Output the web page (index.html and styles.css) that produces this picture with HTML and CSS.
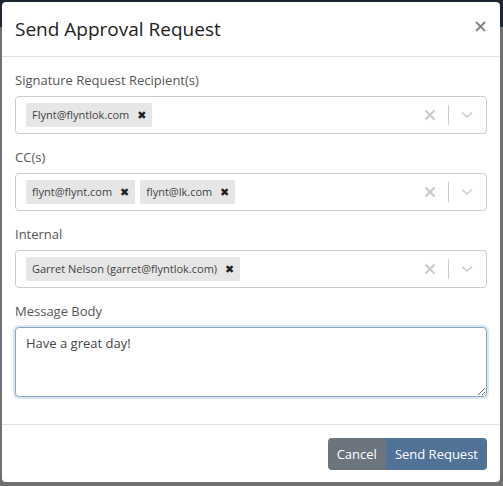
FILE: index.html
```html
<!DOCTYPE html>
<html lang="en">
<head>
    <meta charset="UTF-8">
    <meta name="viewport" content="width=device-width, initial-scale=1.0">
    <title>Send Approval Request</title>
    <link rel="stylesheet" href="styles.css">
</head>
<body>
    <div class="modal">
        <div class="modal-header">
            <h5 class="modal-title">Send Approval Request</h5>
            <button type="button" class="close">
                <svg width="11" height="11" viewBox="0 0 11 11"><path d="M1 1 L10 10 M10 1 L1 10" stroke="#808080" stroke-width="1.8"/></svg>
            </button>
        </div>
        <div class="modal-body">
            <div class="form-group">
                <label>Signature Request Recipient(s)</label>
                <div class="select">
                    <div class="values">
                        <span class="chip">Flynt@flyntlok.com <b>&#x2716;</b></span>
                    </div>
                    <div class="indicators">
                        <svg class="clear" width="12" height="12" viewBox="0 0 12 12"><path d="M1.5 1.5 L10.5 10.5 M10.5 1.5 L1.5 10.5" stroke="#cccccc" stroke-width="2.4"/></svg>
                        <span class="sep"></span>
                        <svg class="chev" width="12" height="8" viewBox="0 0 12 8"><path d="M1 1.5 L6 6 L11 1.5" fill="none" stroke="#cccccc" stroke-width="1.6"/></svg>
                    </div>
                </div>
            </div>
            <div class="form-group">
                <label>CC(s)</label>
                <div class="select">
                    <div class="values">
                        <span class="chip">flynt@flynt.com <b>&#x2716;</b></span>
                        <span class="chip">flynt@lk.com <b>&#x2716;</b></span>
                    </div>
                    <div class="indicators">
                        <svg class="clear" width="12" height="12" viewBox="0 0 12 12"><path d="M1.5 1.5 L10.5 10.5 M10.5 1.5 L1.5 10.5" stroke="#cccccc" stroke-width="2.4"/></svg>
                        <span class="sep"></span>
                        <svg class="chev" width="12" height="8" viewBox="0 0 12 8"><path d="M1 1.5 L6 6 L11 1.5" fill="none" stroke="#cccccc" stroke-width="1.6"/></svg>
                    </div>
                </div>
            </div>
            <div class="form-group">
                <label>Internal</label>
                <div class="select">
                    <div class="values">
                        <span class="chip">Garret Nelson (garret@flyntlok.com) <b>&#x2716;</b></span>
                    </div>
                    <div class="indicators">
                        <svg class="clear" width="12" height="12" viewBox="0 0 12 12"><path d="M1.5 1.5 L10.5 10.5 M10.5 1.5 L1.5 10.5" stroke="#cccccc" stroke-width="2.4"/></svg>
                        <span class="sep"></span>
                        <svg class="chev" width="12" height="8" viewBox="0 0 12 8"><path d="M1 1.5 L6 6 L11 1.5" fill="none" stroke="#cccccc" stroke-width="1.6"/></svg>
                    </div>
                </div>
            </div>
            <div class="form-group">
                <label>Message Body</label>
                <textarea class="message">Have a great day!</textarea>
            </div>
        </div>
        <div class="modal-footer">
            <div class="btn-group">
                <button type="button" class="btn btn-cancel">Cancel</button>
                <button type="button" class="btn btn-send">Send Request</button>
            </div>
        </div>
    </div>
</body>
</html>
```

FILE: styles.css
```css
body {
    margin: 0;
    padding: 2px 3px 4px 2px;
    font-family: "Open Sans", "Noto Sans", sans-serif;
    background: linear-gradient(#1d2733 0, #1d2733 27px, #707070 27px);
    height: 486px;
    box-sizing: border-box;
    overflow: hidden;
}
.modal {
    background: #fff;
    border-radius: 4px;
    height: 480px;
    display: flex;
    flex-direction: column;
}
.modal-header {
    display: flex;
    align-items: center;
    justify-content: space-between;
    padding: 12px 14px 12px 13px;
    border-bottom: 1px solid #dee2e6;
}
.modal-title {
    margin: 0;
    font-size: 19px;
    font-weight: 400;
    line-height: 30px;
    color: #222;
}
.close {
    border: 0;
    background: none;
    padding: 0;
    margin-top: -6px;
    display: flex;
}
.modal-body {
    padding: 13px 13px 0 13px;
    flex: 1;
}
.form-group {
    margin-bottom: 13px;
}
.form-group label {
    display: block;
    font-size: 13px;
    line-height: 20px;
    color: #555;
    margin-bottom: 6px;
}
.select {
    display: flex;
    align-items: center;
    height: 38px;
    box-sizing: border-box;
    border: 1px solid #cccccc;
    border-radius: 4px;
}
.values {
    flex: 1;
    display: flex;
    gap: 5px;
    padding-left: 10px;
}
.chip {
    background: #e6e6e6;
    border-radius: 2px;
    font-size: 11px;
    line-height: 23px;
    color: #444;
    padding: 0 6px;
    white-space: nowrap;
}
.chip b {
    font-size: 11px;
    color: #222;
    margin-left: 5px;
    font-family: "DejaVu Sans", sans-serif;
}
.indicators {
    display: flex;
    align-items: center;
    padding-right: 13px;
}
.clear {
    margin-right: 12px;
}
.sep {
    width: 1px;
    height: 20px;
    background: #cccccc;
    margin-right: 12px;
}
.message {
    display: block;
    width: 100%;
    height: 70px;
    box-sizing: border-box;
    border: 1px solid #8aa6c4;
    border-radius: 4px;
    box-shadow: 0 0 0 2px #dde6ef;
    padding: 6px 10px;
    font-family: "Open Sans", "Noto Sans", sans-serif;
    font-size: 13px;
    color: #444;
    outline: none;
}
.modal-footer {
    display: flex;
    justify-content: flex-end;
    padding: 13px 13px 12px;
    border-top: 1px solid #dee2e6;
}
.btn-group {
    display: flex;
}
.btn {
    border: 0;
    color: #fff;
    font-family: "Open Sans", "Noto Sans", sans-serif;
    font-size: 13px;
    height: 32px;
    padding: 0 9px;
}
.btn-cancel {
    background: #6c757d;
    border-radius: 4px 0 0 4px;
}
.btn-send {
    background: #507296;
    border-radius: 0 4px 4px 0;
}
```
